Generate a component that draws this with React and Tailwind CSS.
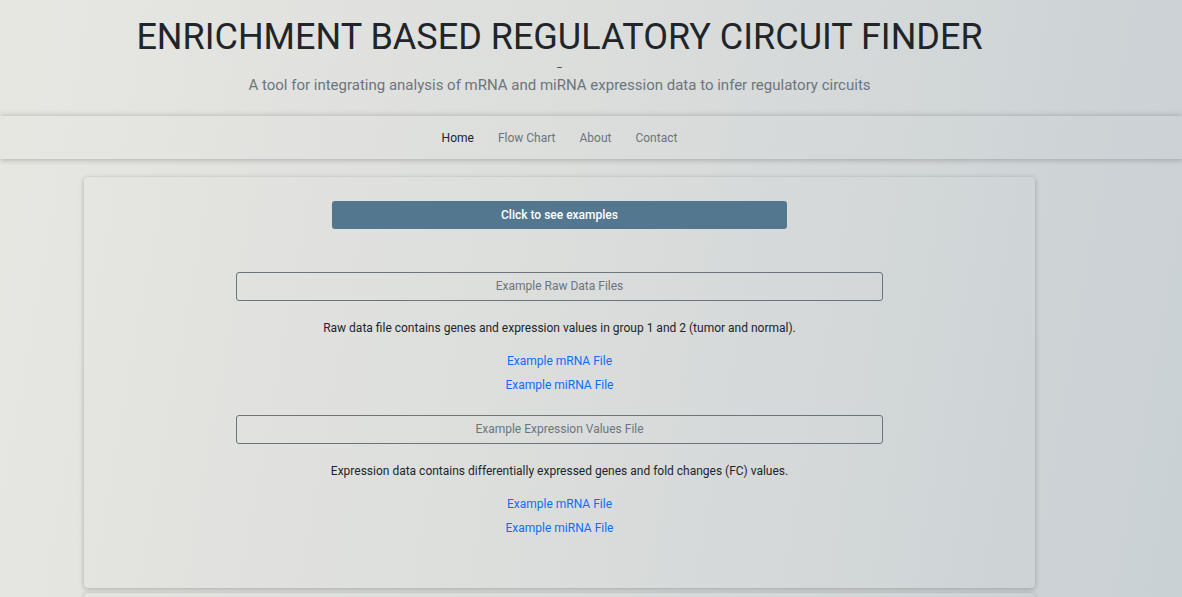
export default function App() {
  const font = { fontFamily: "Roboto, 'Noto Sans', sans-serif" };
  return (
    <div
      className="min-h-[597px] w-full overflow-hidden bg-[linear-gradient(100deg,#e7e7e2_0%,#dcdedc_45%,#c9d0d4_100%)] text-[#212529]"
      style={font}
    >
      <header className="flex flex-col items-center pt-[14px] h-[116px] pr-[63px]">
        <h1 className="text-[36px] leading-[46px] font-normal text-[#212529]">
          ENRICHMENT BASED REGULATORY CIRCUIT FINDER
        </h1>
        <div className="text-[10px] leading-[10px] text-[#444] mt-[3px]">–</div>
        <p className="text-[15px] leading-[22px] text-[#6c757d] mt-[1px]">
          A tool for integrating analysis of mRNA and miRNA expression data to infer regulatory circuits
        </p>
      </header>
      <nav className="h-[43px] flex items-center justify-center gap-[24px] shadow-[0_2px_5px_rgba(0,0,0,0.16),0_-2px_5px_rgba(0,0,0,0.10)] text-[12px] pr-[63px]">
        <span className="text-[#212529]">Home</span>
        <span className="text-[#6c757d]">Flow Chart</span>
        <span className="text-[#6c757d]">About</span>
        <span className="text-[#6c757d]">Contact</span>
      </nav>
      <main className="flex flex-col items-start pl-[84px] pt-[18px]">
        <section className="w-[951px] h-[411px] rounded-[4px] shadow-[0_1px_5px_rgba(0,0,0,0.25)] flex flex-col items-center pt-[24px]">
          <button className="w-[455px] h-[28px] rounded-[3px] bg-[#52778f] text-white text-[12px] font-medium">
            Click to see examples
          </button>
          <div className="mt-[43px] w-[647px] flex flex-col items-center">
            <div className="w-full h-[29px] border border-[#6c757d] rounded-[3px] flex items-center justify-center text-[12px] leading-[16px] pb-[1px] text-[#6c757d]">
              Example Raw Data Files
            </div>
            <p className="mt-[19px] text-[12px] leading-[16px] text-[#212529]">
              Raw data file contains genes and expression values in group 1 and 2 (tumor and normal).
            </p>
            <a className="mt-[17px] text-[12px] leading-[16px] text-[#0d6efd]">Example mRNA File</a>
            <a className="mt-[8px] text-[12px] leading-[16px] text-[#0d6efd]">Example miRNA File</a>
            <div className="mt-[22px] w-full h-[29px] border border-[#6c757d] rounded-[3px] flex items-center justify-center text-[12px] leading-[16px] pb-[1px] text-[#6c757d]">
              Example Expression Values File
            </div>
            <p className="mt-[19px] text-[12px] leading-[16px] text-[#212529]">
              Expression data contains differentially expressed genes and fold changes (FC) values.
            </p>
            <a className="mt-[17px] text-[12px] leading-[16px] text-[#0d6efd]">Example mRNA File</a>
            <a className="mt-[8px] text-[12px] leading-[16px] text-[#0d6efd]">Example miRNA File</a>
          </div>
        </section>
        <section className="mt-[5px] w-[951px] h-[60px] rounded-[4px] shadow-[0_1px_5px_rgba(0,0,0,0.25)]"></section>
      </main>
    </div>
  );
}
